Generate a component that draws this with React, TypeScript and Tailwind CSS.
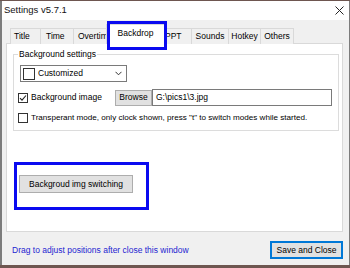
import { FC } from 'react';

const font = { fontFamily: '"Liberation Sans", Arial, sans-serif' };

const Check: FC<{ checked?: boolean }> = ({ checked }) => (
  <span className="flex h-[10px] w-[10px] shrink-0 items-center justify-center border border-[#333] bg-white">
    {checked && (
      <svg width="8" height="8" viewBox="0 0 8 8">
        <path d="M1 4.2 L3 6.2 L7 1.5" fill="none" stroke="#222" strokeWidth="1.1" />
      </svg>
    )}
  </span>
);

const tabs = [
  { label: 'Title', w: 'w-[30px] pl-[3px]' },
  { label: 'Time', w: 'w-[33px] pl-[5px]' },
  { label: 'Overtime', w: 'w-[35px] pl-[4px]' },
];
const tabsRight = [
  { label: 'PPT', w: 'w-[28px] pl-[1px]' },
  { label: 'Sounds', w: 'w-[37px] justify-center' },
  { label: 'Hotkey', w: 'w-[32px] justify-center' },
  { label: 'Others', w: 'w-[34px] justify-center' },
];

const Tab: FC<{ label: string; w: string }> = ({ label, w }) => (
  <div className={`flex h-[16px] items-center overflow-hidden whitespace-nowrap border border-r-0 border-b-0 border-[#d9d9d9] bg-[#f0f0f0] last:border-r ${w}`}>
    {label}
  </div>
);

const App: FC = () => {
  return (
    <div className="relative h-[268px] w-[350px] overflow-hidden bg-[#6e5650] pt-px text-[8.5px] text-black" style={font}>
      <div className="flex h-[264px] flex-col border-l-2 border-r border-[#7c7c7c] bg-[#f0f0f0]">
        <div className="flex h-[19px] items-center justify-between bg-white pl-[2px] pr-[5px]">
          <span className="text-[9.5px] text-[#111]">Settings v5.7.1</span>
          <svg width="9" height="9" viewBox="0 0 9 9">
            <path d="M0.5 0.5 L8.5 8.5 M8.5 0.5 L0.5 8.5" stroke="#222" strokeWidth="1" />
          </svg>
        </div>

        <div className="ml-[4px] mr-[6px] mt-[4px] flex flex-col">
          <div className="relative z-10 -mb-px flex h-[20px] items-end pl-[4px]">
            {tabs.map((t) => (
              <Tab key={t.label} {...t} />
            ))}
            <div className="relative z-10 -mr-[2px] -ml-[2px] flex h-[20px] w-[59px] items-center justify-center border border-b-0 border-[#d9d9d9] bg-white pb-[3px]">
              Backdrop
            </div>
            {tabsRight.map((t) => (
              <Tab key={t.label} {...t} />
            ))}
          </div>

          <div className="flex h-[189px] flex-col border border-[#d9d9d9] bg-white pl-[6px] pr-[3px]">
            <fieldset className="mt-[5px] border border-[#dcdcdc] pb-[6px] pl-[4px] pr-[6px]">
              <legend className="ml-0 px-[1px] leading-[10px]">Background settings</legend>
              <div className="ml-[2px] mt-[6px] flex h-[17px] w-[107px] items-center border border-[#7a7a7a] bg-white pl-[2px] pr-[4px]">
                <span className="h-[12px] w-[12px] border border-[#333]" />
                <span className="ml-[3px] flex-1">Customized</span>
                <svg width="7" height="5" viewBox="0 0 7 5">
                  <path d="M0.5 0.8 L3.5 3.8 L6.5 0.8" fill="none" stroke="#333" strokeWidth="1" />
                </svg>
              </div>
              <div className="mt-[7px] flex h-[17px] items-center">
                <Check checked />
                <span className="ml-[3px] w-[84px]">Background image</span>
                <div className="flex h-[16px] w-[37px] items-center justify-center border border-[#adadad] bg-[#e1e1e1]">Browse</div>
                <div className="flex h-[17px] flex-1 items-center border border-[#7a7a7a] bg-white pl-[3px]">G:\pics1\3.jpg</div>
              </div>
              <div className="mt-[6px] flex items-center">
                <Check />
                <span className="ml-[3px] whitespace-nowrap text-[8.1px]">Transperant mode, only clock shown, press "t" to switch modes while started.</span>
              </div>
            </fieldset>

            <div className="ml-[1px] mt-[31px] w-[135px] border-[3px] border-[#0a0af0] pb-[14px] pl-[2px] pt-[10px]">
              <div className="flex h-[18px] w-[114px] items-center justify-center border border-[#adadad] bg-[#e1e1e1]">
                Backgroud img switching
              </div>
            </div>
          </div>

          <div className="mt-[9px] flex items-center justify-between pl-[6px]">
            <span className="text-[#1e1ed0]">Drag to adjust positions after close this window</span>
            <div className="flex h-[18px] w-[73px] items-center justify-center border-2 border-[#0078d7] bg-[#e1e1e1]">
              Save and Close
            </div>
          </div>
        </div>
      </div>
      <div className="absolute left-[107px] top-[21px] z-20 h-[29px] w-[60px] border-[3px] border-[#0a0af0]" />
    </div>
  );
};

export default App;
